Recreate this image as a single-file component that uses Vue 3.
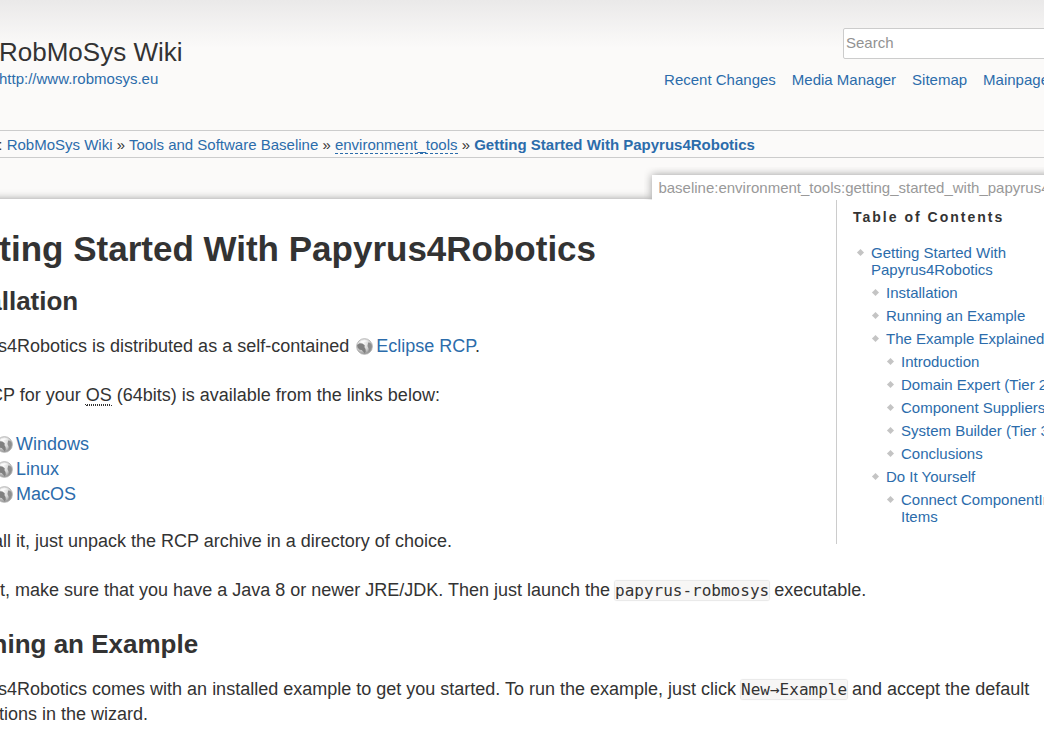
<script setup>
const tools = ['Recent Changes', 'Media Manager', 'Sitemap', 'Mainpage']

const downloads = ['Windows', 'Linux', 'MacOS']

const toc = [
  { level: 1, text: 'Getting Started With Papyrus4Robotics' },
  { level: 2, text: 'Installation' },
  { level: 2, text: 'Running an Example' },
  { level: 2, text: 'The Example Explained' },
  { level: 3, text: 'Introduction' },
  { level: 3, text: 'Domain Expert (Tier 2)' },
  { level: 3, text: 'Component Suppliers' },
  { level: 3, text: 'System Builder (Tier 3)' },
  { level: 3, text: 'Conclusions' },
  { level: 2, text: 'Do It Yourself' },
  { level: 3, text: 'Connect ComponentInstance Items' }
]
</script>

<template>
  <div class="viewport">
    <svg class="defs" width="0" height="0" aria-hidden="true">
      <defs>
        <radialGradient id="ball" cx="0.4" cy="0.3" r="0.7">
          <stop offset="0" stop-color="#fafafa" />
          <stop offset="0.6" stop-color="#d4d4d4" />
          <stop offset="1" stop-color="#8f8f8f" />
        </radialGradient>
        <symbol id="globe" viewBox="0 0 16 16">
          <circle cx="8" cy="8" r="7.4" fill="url(#ball)" stroke="#b0b0b0" stroke-width="0.8" />
          <path d="M1 6.6 L3.4 5 L6 5.2 L8.2 6.8 L8 8.6 L9 10.4 L9.2 13 L8.2 14.4 L6.6 12.6 L5.4 11.4 L3.4 11 L1.4 9Z" fill="#808080" />
          <path d="M11.4 4.2 L13.4 4.4 L14.8 6.6 L14.8 9 L13.4 11.8 L11.6 13.2 L12 10.4 L10.8 7.6Z" fill="#8f8f8f" />
          <path d="M3.6 3.8 Q7.4 0.6 12 3.2 Q8.4 2.8 6.4 4.8Z" fill="#fff" opacity="0.8" />
        </symbol>
      </defs>
    </svg>

    <div class="site">
      <header class="header">
        <div class="brand">
          <p class="title">RobMoSys Wiki</p>
          <a class="tagline" href="#">http://www.robmosys.eu</a>
        </div>
        <div class="tools">
          <input class="search" type="text" placeholder="Search" aria-label="Search" />
          <nav class="links">
            <a v-for="t in tools" :key="t" href="#">{{ t }}</a>
          </nav>
        </div>
      </header>

      <nav class="crumbs">
        You are here: <a href="#">RobMoSys Wiki</a> » <a href="#">Tools and Software Baseline</a> »
        <a class="missing" href="#">environment_tools</a> »
        <a class="current" href="#">Getting Started With Papyrus4Robotics</a>
      </nav>

      <main class="page">
        <div class="pageid"><span>baseline:environment_tools:getting_started_with_papyrus4robotics</span></div>

        <aside class="toc">
          <h3>Table of Contents</h3>
          <ul>
            <li v-for="item in toc" :key="item.text" :class="'level' + item.level">
              <a href="#">{{ item.text }}</a>
            </li>
          </ul>
        </aside>

        <h1>Getting Started With Papyrus4Robotics</h1>
        <h2>Installation</h2>
        <p>
          Papyrus4Robotics is distributed as a self-contained
          <a class="ext" href="#"><svg class="globe"><use href="#globe" /></svg>Eclipse RCP</a>.
        </p>
        <p>The RCP for your <abbr>OS</abbr> (64bits) is available from the links below:</p>
        <ul class="downloads">
          <li v-for="d in downloads" :key="d">
            <a class="ext" href="#"><svg class="globe"><use href="#globe" /></svg>{{ d }}</a>
          </li>
        </ul>
        <p>To install it, just unpack the RCP archive in a directory of choice.</p>
        <p>
          To run it, make sure that you have a Java 8 or newer JRE/JDK. Then just launch the
          <code>papyrus-robmosys</code> executable.
        </p>
        <h2>Running an Example</h2>
        <p>
          Papyrus4Robotics comes with an installed example to get you started. To run the example, just click
          <code>New→Example</code> and accept the default suggestions in the wizard.
        </p>
      </main>
    </div>
  </div>
</template>

<style>
body {
  margin: 0;
  background: #fbfaf9;
}
</style>

<style scoped>
.viewport {
  overflow: hidden;
  height: 100vh;
  background: linear-gradient(#eae9e9 0, #fbfaf9 48px);
  font: 15px/20px "Liberation Sans", Arial, sans-serif;
  color: #333;
}
.defs {
  display: block;
}
.site {
  margin: 0 -84px 0 -91px;
}
a {
  color: #2b6cab;
  text-decoration: none;
}
.header {
  display: flex;
  justify-content: space-between;
  height: 130px;
}
.brand {
  padding: 36px 0 0 90px;
}
.title {
  margin: 0;
  font-size: 26px;
  line-height: 32px;
}
.tagline {
  display: block;
  line-height: 22px;
}
.tools {
  display: flex;
  flex-direction: column;
  align-items: flex-end;
  padding-top: 28px;
}
.search {
  box-sizing: border-box;
  width: 285px;
  height: 31px;
  padding: 0 2px 2px;
  border: 1px solid #ccc;
  border-radius: 2px;
  background: #fff;
  font: inherit;
  color: #333;
}
.search::placeholder {
  color: #929292;
  opacity: 1;
}
.links {
  display: flex;
  gap: 16px;
  padding: 11px 79px 0 0;
}
.crumbs {
  border-top: 1px solid #ccc;
  border-bottom: 1px solid #ccc;
  padding: 4px 0 2px 4px;
}
.missing {
  border-bottom: 1px dashed #2b6cab;
}
.current {
  font-weight: bold;
}
.page {
  position: relative;
  margin-top: 41px;
  padding: 29px 32px 32px;
  background: #fff;
  box-shadow: 0 0 8px #999;
  font-size: 18px;
  line-height: 25px;
}
.pageid {
  position: absolute;
  top: -24px;
  right: 20px;
  overflow: hidden;
  padding: 8px 8px 0;
  margin: -8px -8px 0;
  font-size: 15px;
  line-height: 24px;
  color: #999;
}
.pageid span {
  display: block;
  padding: 1px 6px 0;
  background: #fff;
  box-shadow: 0 0 8px #999;
}
.toc {
  float: right;
  box-sizing: border-box;
  width: 292px;
  margin: -28px -32px 22px 22px;
  padding: 8px 16px 13px;
  border-left: 1px solid #ccc;
  background: #fff;
  font-size: 15px;
  line-height: 17px;
}
.toc h3 {
  margin: 0 0 18px;
  font-size: 14px;
  line-height: 18px;
  letter-spacing: 2px;
}
.toc ul {
  list-style: none;
  margin: 0;
  padding: 0;
}
.toc li {
  position: relative;
  margin-bottom: 6px;
}
.toc li::before {
  content: "";
  position: absolute;
  left: -13px;
  top: 6px;
  width: 5px;
  height: 5px;
  background: #c4c4c4;
  transform: rotate(45deg);
}
.level1 {
  margin-left: 18px;
}
.level2 {
  margin-left: 33px;
}
.level3 {
  margin-left: 48px;
}
h1 {
  margin: 0 0 14px;
  font-size: 35px;
  line-height: 42px;
}
h2 {
  margin: 0 0 16px;
  font-size: 26px;
  line-height: 34px;
}
p {
  margin: 0 0 24px;
}
.downloads {
  list-style: none;
  margin: 0 0 22px;
  padding: 0 0 0 53px;
}
.globe {
  width: 17px;
  height: 17px;
  margin: 0 3px 0 2px;
  vertical-align: -3px;
}
abbr {
  border-bottom: 1px dotted #333;
  text-decoration: underline dotted 1px;
  text-underline-offset: 3px;
}
code {
  border-radius: 2px;
  background: #f7f6f5;
  box-shadow: 0 0 1px 1px #e8e8e8;
  font: 16px/20px "DejaVu Sans Mono", monospace;
}
</style>
